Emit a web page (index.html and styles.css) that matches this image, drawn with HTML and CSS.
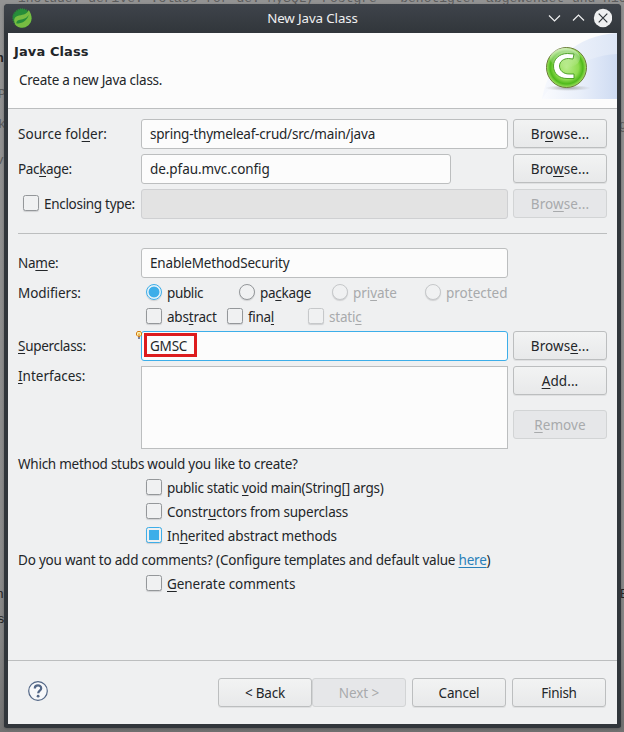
FILE: index.html
```
<!DOCTYPE html>
<html lang="en">
<head>
<meta charset="utf-8">
<title>New Java Class</title>
<link rel="stylesheet" href="styles.css">
</head>
<body>
<div class="backdrop" aria-hidden="true">
  <span class="bg-code">include: derive: .class for de. MySQL, Postgre   benötigter abgewendet und nicht SQLite</span>
  <span class="bg-bit b1">n</span><span class="bg-bit b2">P</span><span class="bg-bit b3">k</span><span class="bg-bit b4">v</span>
  <span class="bg-bit b5">n</span><span class="bg-bit b6">s</span><span class="bg-bit b7">E</span><span class="bg-bit b8">g</span>
</div>
<main class="window">
  <header class="titlebar">
    <svg class="logo" viewBox="0 0 20 20"><circle cx="10" cy="10" r="9" fill="#278d39" stroke="#278d39" stroke-width="1.4" stroke-dasharray="1.2 .9"/><path d="M16.8 2C20 7 21 13 16.500 17.200C12 21 6 20 3.500 17C1 12 2 8.500 7 7.500C12 6.700 15 6 16.800 2Z" fill="#77bc42"/><path d="M4.500 15.500C10 15.500 15 13 16.800 7C14 11 10 11.500 7 12C5 12.500 4 14 4.500 15.500Z" fill="#278d39"/></svg>
    <h1>New Java Class</h1>
    <svg class="controls" viewBox="0 0 66 20" fill="none"><path d="M3 7.500 8.500 13 14 7.500M27 12.500 32.500 7 38 12.500" stroke="#eff0f1" stroke-width="1.200"/><circle cx="57" cy="10" r="9.200" fill="#eff0f1"/><path d="M52.700 5.700 61.300 14.300M61.300 5.700 52.700 14.300" stroke="#31363b" stroke-width="1.200"/></svg>
  </header>
  <section class="banner">
    <div class="banner-text">
      <h2>Java Class</h2>
      <p class="k25">Create a new Java class.</p>
    </div>
    <svg class="banner-art" viewBox="0 0 75 66">
      <defs>
        <linearGradient id="sky"><stop offset="0" stop-color="#fafbfe"/><stop offset=".5" stop-color="#e9effa"/><stop offset="1" stop-color="#cedbf2"/></linearGradient>
        <linearGradient id="sky2"><stop offset="0" stop-color="#f6f8fd"/><stop offset="1" stop-color="#dde6f6"/></linearGradient>
        <radialGradient id="ball" cx=".5" cy=".5" r=".5"><stop offset="0" stop-color="#b9ec8c"/><stop offset=".6" stop-color="#8fdc50"/><stop offset=".82" stop-color="#4fb91b"/><stop offset="1" stop-color="#a6e567"/></radialGradient>
        <linearGradient id="shine" x1="0" y1="0" x2="0" y2="1"><stop offset="0" stop-color="#fff" stop-opacity=".6"/><stop offset="1" stop-color="#fff" stop-opacity="0"/></linearGradient>
        <radialGradient id="shade"><stop offset="0" stop-color="#777" stop-opacity=".65"/><stop offset="1" stop-color="#999" stop-opacity="0"/></radialGradient>
      </defs>
      <path d="M0 66C7 27 34 3 75 0V66Z" fill="url(#sky2)"/>
      <path d="M0 66C15 43 39 23 75 21V66Z" fill="url(#sky)"/>
      <ellipse cx="26" cy="55" rx="23" ry="3" fill="url(#shade)"/>
      <circle cx="24.500" cy="34.500" r="20" fill="url(#ball)" stroke="#697a38" stroke-width="1"/>
      <ellipse cx="23" cy="25" rx="15" ry="10" fill="url(#shine)"/>
      <path d="M32 21L25.500 20.500C17 20.500 11.500 26.500 11.500 33C11.500 40.500 17 45.500 25 45.500H32V41H27C21.500 41 17.500 37.500 17.500 33C17.500 28.500 21.500 25.500 26.500 25.500L31 26Z" fill="#fff" stroke="#43991d" stroke-width=".9"/>
    </svg>
  </section>
  <section class="form">
    <div class="row"><label><span class="w5">Source fol<u>d</u>er:</span></label><div class="field"><span class="k20">spring-thymeleaf-crud/src/main/java</span></div><button>Br<u>o</u>wse...</button></div>
    <div class="row"><label><span class="k35">Pac<u>k</u>age:</span></label><div class="field short"><span class="k10">de.pfau.mvc.config</span></div><button>Bro<u>w</u>se...</button></div>
    <div class="row"><label class="enclosing"><i class="check"></i><span class="k30">Enclosing type:</span></label><div class="field off"></div><button disabled>Bro<u>w</u>se...</button></div>
    <hr>
    <div class="row"><label><span class="k25">Na<u>m</u>e:</span></label><div class="field"><span class="k18">EnableMethodSecurity</span></div></div>
    <div class="options radios"><label><span class="k10">Modifiers:</span></label>
      <span class="option"><i class="radio on"></i><span class="k35">public</span></span><span class="option"><i class="radio"></i><span class="k30">pa<u>c</u>kage</span></span><span class="option dim"><i class="radio"></i><span class="k10">pri<u>v</u>ate</span></span><span class="option dim"><i class="radio"></i><span>pro<u>t</u>ected</span></span></div>
    <div class="options flags"><span></span><span class="option"><i class="check"></i><span class="k20">abs<u>t</u>ract</span></span><span class="option"><i class="check"></i><span class="k30">fina<u>l</u></span></span><span class="option dim"><i class="check"></i><span class="k20">stati<u>c</u></span></span></div>
    <div class="row super"><label><span class="k30"><u>S</u>uperclass:</span></label><div class="field focus"><svg class="bulb" viewBox="0 0 6 9"><path d="M1.500 .5H4.500L5.500 2V4L4 5.500H2L.5 4V2Z" fill="#fff4ae" stroke="#d47b13"/><path d="M3 2.500V5" stroke="#d47b13"/><path d="M3 6V8" stroke="#7c7f9e" stroke-width="2"/></svg><span class="marked"></span><span class="k20">GMSC</span></div><button>Brows<u>e</u>...</button></div>
    <div class="row tall"><label><span><u>I</u>nterfaces:</span></label><div class="list"></div><div class="stack"><button><u>A</u>dd...</button><button disabled><u>R</u>emove</button></div></div>
    <div class="line k25">Which method stubs would you like to create?</div>
    <div class="line indent"><span class="option"><i class="check"></i><span class="k30">public static <u>v</u>oid main(String[] args)</span></span></div>
    <div class="line indent"><span class="option"><i class="check"></i><span class="k18">Constr<u>u</u>ctors from superclass</span></span></div>
    <div class="line indent"><span class="option"><i class="check on"></i><span class="k15">In<u>h</u>erited abstract methods</span></span></div>
    <div class="line k20">Do you want to add comments? (Configure templates and default value <a>here</a>)</div>
    <div class="line indent"><span class="option"><i class="check"></i><span class="k10"><u>G</u>enerate comments</span></span></div>
  </section>
  <footer>
    <svg class="help" viewBox="0 0 22 22" fill="none"><circle cx="11" cy="11" r="9.300" fill="#f7f8fa" stroke="#526686" stroke-width="1.200"/><path d="M7.800 8.500C7.800 4.500 14.200 4.500 14.200 8.200C14.200 10.700 11.200 10.600 11.200 13.300" stroke="#526686" stroke-width="2.200"/><circle cx="11.100" cy="16.200" r="1.400" fill="#526686"/></svg>
    <div class="pair"><button class="k20">&lt; Back</button><button class="k10" disabled>Next &gt;</button></div>
    <button class="k20">Cancel</button><button class="k30">Finish</button>
  </footer>
</main>
</body>
</html>
```
FILE: styles.css
```
* { box-sizing: border-box; }
body {
  margin: 0; width: 624px; height: 732px; padding: 4px 3px 4px 4px; overflow: hidden; position: relative;
  font: 13.5px/20px "Noto Sans", sans-serif; color: #232629;
}
.backdrop { position: absolute; inset: 0; overflow: hidden; background: linear-gradient(#939393, #8b8b8b 570px, #858585 640px, #727272); }
.backdrop span { position: absolute; color: #5c5c5c; font: 13px/16px "Liberation Mono", monospace; white-space: pre; }
.backdrop .bg-code { left: 18px; top: -9px; }
.backdrop .b1 { left: -4px; top: 51px; color: #222; font-weight: bold; }
.backdrop .b2 { left: -2px; top: 87px; }
.backdrop .b3 { left: -2px; top: 117px; }
.backdrop .b4 { left: -4px; top: 153px; }
.backdrop .b5 { left: -4px; top: 587px; color: #222; }
.backdrop .b6 { left: -3px; top: 612px; color: #222; }
.backdrop .b7 { left: 620px; top: 587px; color: #222; }
.backdrop .b8 { left: 619px; top: 118px; }
.window {
  position: relative; height: 724px; border: solid #31363b; border-width: 0 4px 4px; border-radius: 4px 4px 3px 3px;
  display: flex; flex-direction: column; background: #eff0f1; box-shadow: 0 1px 3px #4448;
}
.titlebar {
  height: 29px; margin: 0 -4px; padding: 0 9px 2px 8px; border-radius: 4px 4px 0 0; display: flex; align-items: center; justify-content: space-between;
  background: linear-gradient(#3f444b, #31363b);
}
.logo { width: 20px; height: 20px; margin-right: 46px; }
.titlebar h1 { margin: 0 -1px 0 0; font-size: 13.33px; font-weight: 400; color: #eff0f1; line-height: 20px; letter-spacing: -.12px; }
.controls { width: 66px; height: 20px; }
.banner { height: 76px; display: flex; justify-content: space-between; background: #fcfcfc; border-bottom: 1px solid #bcbebf; }
.banner-text { padding: 10px 0 0 6px; }
.banner h2 { margin: 0; font: bold 13px/18px "DejaVu Sans", sans-serif; letter-spacing: .1px; }
.banner p { margin: 9px 0 0 5px; }
.banner-art { width: 75px; height: 66px; }
.form { flex: 1; padding: 10px 10px 0; white-space: nowrap; }
.row { display: grid; grid-template-columns: 123px 367px 99px; height: 30px; margin-bottom: 5px; align-items: start; }
.row > :nth-child(3) { margin-left: 5px; }
.row > label { line-height: 30px; }
.enclosing { display: flex; align-items: center; gap: 5px; padding-left: 5px; }
.field { height: 30px; padding-left: 8px; line-height: 28px; background: #fcfcfc; border: 1px solid #bcbebf; border-radius: 3px; position: relative; }
.field.short { width: 310px; }
.field.off { background: #e3e3e3; border-color: #cfd0d2; }
.field.focus { border-color: #3daee9; }
.marked { position: absolute; left: 2px; top: 1px; width: 53px; height: 24px; border: 3px solid #dd1c1e; }
.bulb { position: absolute; left: -6px; top: -1px; width: 6px; height: 9px; }
button {
  width: 94px; height: 29px; padding: 1px 0 0; border: 1px solid #bcbebf; border-radius: 3px; font: inherit; line-height: 26px; color: inherit;
  letter-spacing: .1px; background: linear-gradient(#f2f3f3, #e8e9ea); box-shadow: 0 1px 0 #dfe0e1;
}
button:disabled { color: #a8aaac; border-color: #d2d4d5; background: #e6e7e9; box-shadow: none; }
hr { height: 1px; margin: 14px 0; border: 0; background: #bcbebf; }
u { text-decoration: underline 1px; text-underline-offset: 2px; text-decoration-skip-ink: none; }

/* tracking steps, in hundredths of a pixel */
.w5 { letter-spacing: .05px; }
.k10 { letter-spacing: -.07px; }
.k15 { letter-spacing: -.14px; }
.k18 { letter-spacing: -.18px; }
.k20 { letter-spacing: -.21px; }
.k25 { letter-spacing: -.25px; }
.k30 { letter-spacing: -.3px; }
.k35 { letter-spacing: -.36px; }

.option { display: flex; align-items: center; gap: 5px; }
.dim { color: #a8aaac; }
.options { display: grid; height: 24px; align-items: center; }
.radios { grid-template-columns: 128px 93px 93px 93px auto; margin-top: -2px; }
.flags { grid-template-columns: 128px 81px 81px auto; }
.check, .radio { flex: none; width: 16px; height: 16px; border: 1px solid #94979a; border-radius: 2.500px; background: #f0f1f2; box-shadow: 0 1px 1px #cfd0d2; margin-top: -2px; }
.radio { border-radius: 50%; }
.dim .check, .dim .radio, .dim.option i { border-color: #c6c8ca; }
.radio.on, .check.on { border-color: #3daee9; padding: 2px; background: #3daee9 content-box; }
.radio.on { background: radial-gradient(circle, #3daee9 5px, #e2f1f9 5.800px); }
.super { margin-top: 2px; }
.tall { height: 83px; margin-bottom: 5px; }
.tall > label { line-height: 20px; }
.list { height: 83px; background: #fcfcfc; border: 1px solid #bcbebf; }
.stack { display: flex; flex-direction: column; gap: 15px; }
.line { height: 24px; line-height: 20px; display: flex; align-items: flex-start; white-space: pre; }
.indent { padding-left: 128px; }
a { color: #2980b9; text-decoration: underline 1px; text-underline-offset: 2px; }
footer { height: 64px; border-top: 1px solid #bcbebf; display: flex; gap: 6px; padding: 17px 11px 0 19px; }
.help { width: 22px; height: 22px; margin: 2px auto 0 0; }
.pair { display: flex; }
button.k10 { letter-spacing: -.07px; }
button.k20 { letter-spacing: -.21px; }
button.k30 { letter-spacing: -.3px; }
```
